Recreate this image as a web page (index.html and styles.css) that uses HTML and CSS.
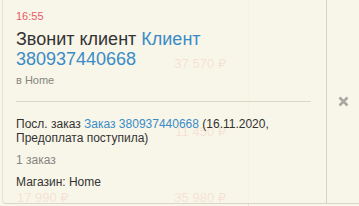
FILE: index.html
```html
<!DOCTYPE html>
<html lang="ru">
<head>
<meta charset="utf-8">
<title>Звонок</title>
<link rel="stylesheet" href="styles.css">
</head>
<body>
<div class="backdrop" aria-hidden="true">
  <span class="price p1">37 570 ₽</span>
  <span class="price p2">11 450 ₽</span>
  <span class="price p3">17 990 ₽</span>
  <span class="price p4">35 980 ₽</span>
  <span class="vline"></span>
</div>
<div class="panel">
  <div class="content">
    <div class="time">16:55</div>
    <div class="title">Звонит клиент <a class="link" href="#">Клиент 380937440668</a></div>
    <div class="muted where">в Home</div>
    <div class="sep"></div>
    <div class="order">Посл. заказ <a class="link" href="#">Заказ 380937440668</a> (16.11.2020, Предоплата поступила)</div>
    <div class="muted count">1 заказ</div>
    <div class="shop">Магазин: Home</div>
  </div>
  <div class="close">
    <svg width="11" height="11" viewBox="0 0 11 11"><path d="M1.5 1.5 L9.5 9.5 M9.5 1.5 L1.5 9.5" stroke="#a9a9a3" stroke-width="2.6" stroke-linecap="butt"/></svg>
  </div>
</div>
</body>
</html>
```
FILE: styles.css
```css
html, body {
  margin: 0;
  padding: 0;
}
body {
  width: 359px;
  height: 206px;
  background: #ecebe3;
  font-family: "Liberation Sans", Arial, "DejaVu Sans", sans-serif;
  color: #333;
  position: relative;
  overflow: hidden;
}
.panel {
  position: relative;
  z-index: 1;
  margin-left: 2px;
  height: 203px;
  display: flex;
  background: rgba(248, 246, 233, 0.86);
  border-left: 1px solid #e4e1d2;
  border-bottom: 1px solid #d9d6c7;
  border-bottom-left-radius: 4px;
}
.content {
  flex: 1;
  padding: 10px 15px 0 13px;
  border-right: 1px solid #d6d2c2;
}
.time {
  font-size: 11px;
  line-height: 13px;
  color: #e85a65;
}
.title {
  margin-top: 6px;
  font-size: 18px;
  line-height: 20px;
  color: #333;
}
.link {
  color: #3a8bc6;
  text-decoration: none;
}
.muted {
  color: #858580;
}
.where {
  margin-top: 5px;
  font-size: 11px;
  line-height: 13px;
}
.sep {
  margin: 14px 0 15px 0;
  height: 1px;
  background: #dcd8c6;
}
.order {
  font-size: 12px;
  line-height: 14px;
}
.count {
  margin-top: 8px;
  font-size: 12px;
  line-height: 14px;
}
.shop {
  margin-top: 8px;
  font-size: 12px;
  line-height: 14px;
}
.close {
  width: 32px;
  display: flex;
  align-items: center;
  justify-content: center;
}
.backdrop {
  position: absolute;
  inset: 0;
  z-index: 0;
  background: #f8f6e9;
}
.price {
  position: absolute;
  font-size: 13px;
  line-height: 15px;
  color: #e06a52;
  white-space: nowrap;
}
.p1 { top: 56px; right: 133px; }
.p2 { top: 124px; right: 133px; }
.p3 { top: 190px; left: 17px; }
.p4 { top: 190px; right: 133px; }
.vline {
  position: absolute;
  top: 0;
  bottom: 0;
  left: 248px;
  width: 1px;
  background: #e6e2cf;
}
```
